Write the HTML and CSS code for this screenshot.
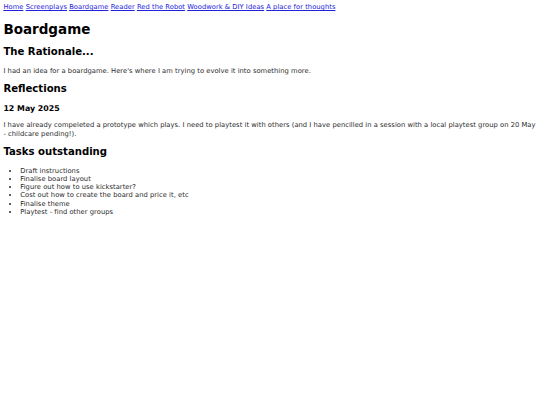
FILE: index.html
```html
<!DOCTYPE html>
<html>
<head>
<meta charset="utf-8">
<link rel="stylesheet" href="styles.css">
<title>Boardgame</title>
</head>
<body>
<nav class="nav">
<a href="#">Home</a> <a href="#">Screenplays</a> <a href="#">Boardgame</a> <a href="#">Reader</a> <a href="#">Red the Robot</a> <a href="#">Woodwork &amp; DIY Ideas</a> <a href="#">A place for thoughts</a>
</nav>
<h1>Boardgame</h1>
<h2>The Rationale...</h2>
<p>I had an idea for a boardgame. Here's where I am trying to evolve it into something more.</p>
<h2>Reflections</h2>
<h3>12 May 2025</h3>
<p>I have already compeleted a prototype which plays. I need to playtest it with others (and I have pencilled in a session with a local playtest group on 20 May - childcare pending!).</p>
<h2>Tasks outstanding</h2>
<ul class="tasks">
<li>Draft instructions</li>
<li>Finalise board layout</li>
<li>Figure out how to use kickstarter?</li>
<li>Cost out how to create the board and price it, etc</li>
<li>Finalise theme</li>
<li>Playtest - find other groups</li>
</ul>
</body>
</html>
```
FILE: styles.css
```css
body {
  margin: 3.375px;
  font-family: Verdana, "DejaVu Sans", sans-serif;
  font-size: 6.75px;
  line-height: 1.215;
  letter-spacing: 0.03px;
  color: #2a2a2a;
  background: #fff;
}
a { color: #2222dd; }
h1, h2, h3 { color: #000; letter-spacing: 0; }
.tasks { padding-left: 16.875px; }
```
